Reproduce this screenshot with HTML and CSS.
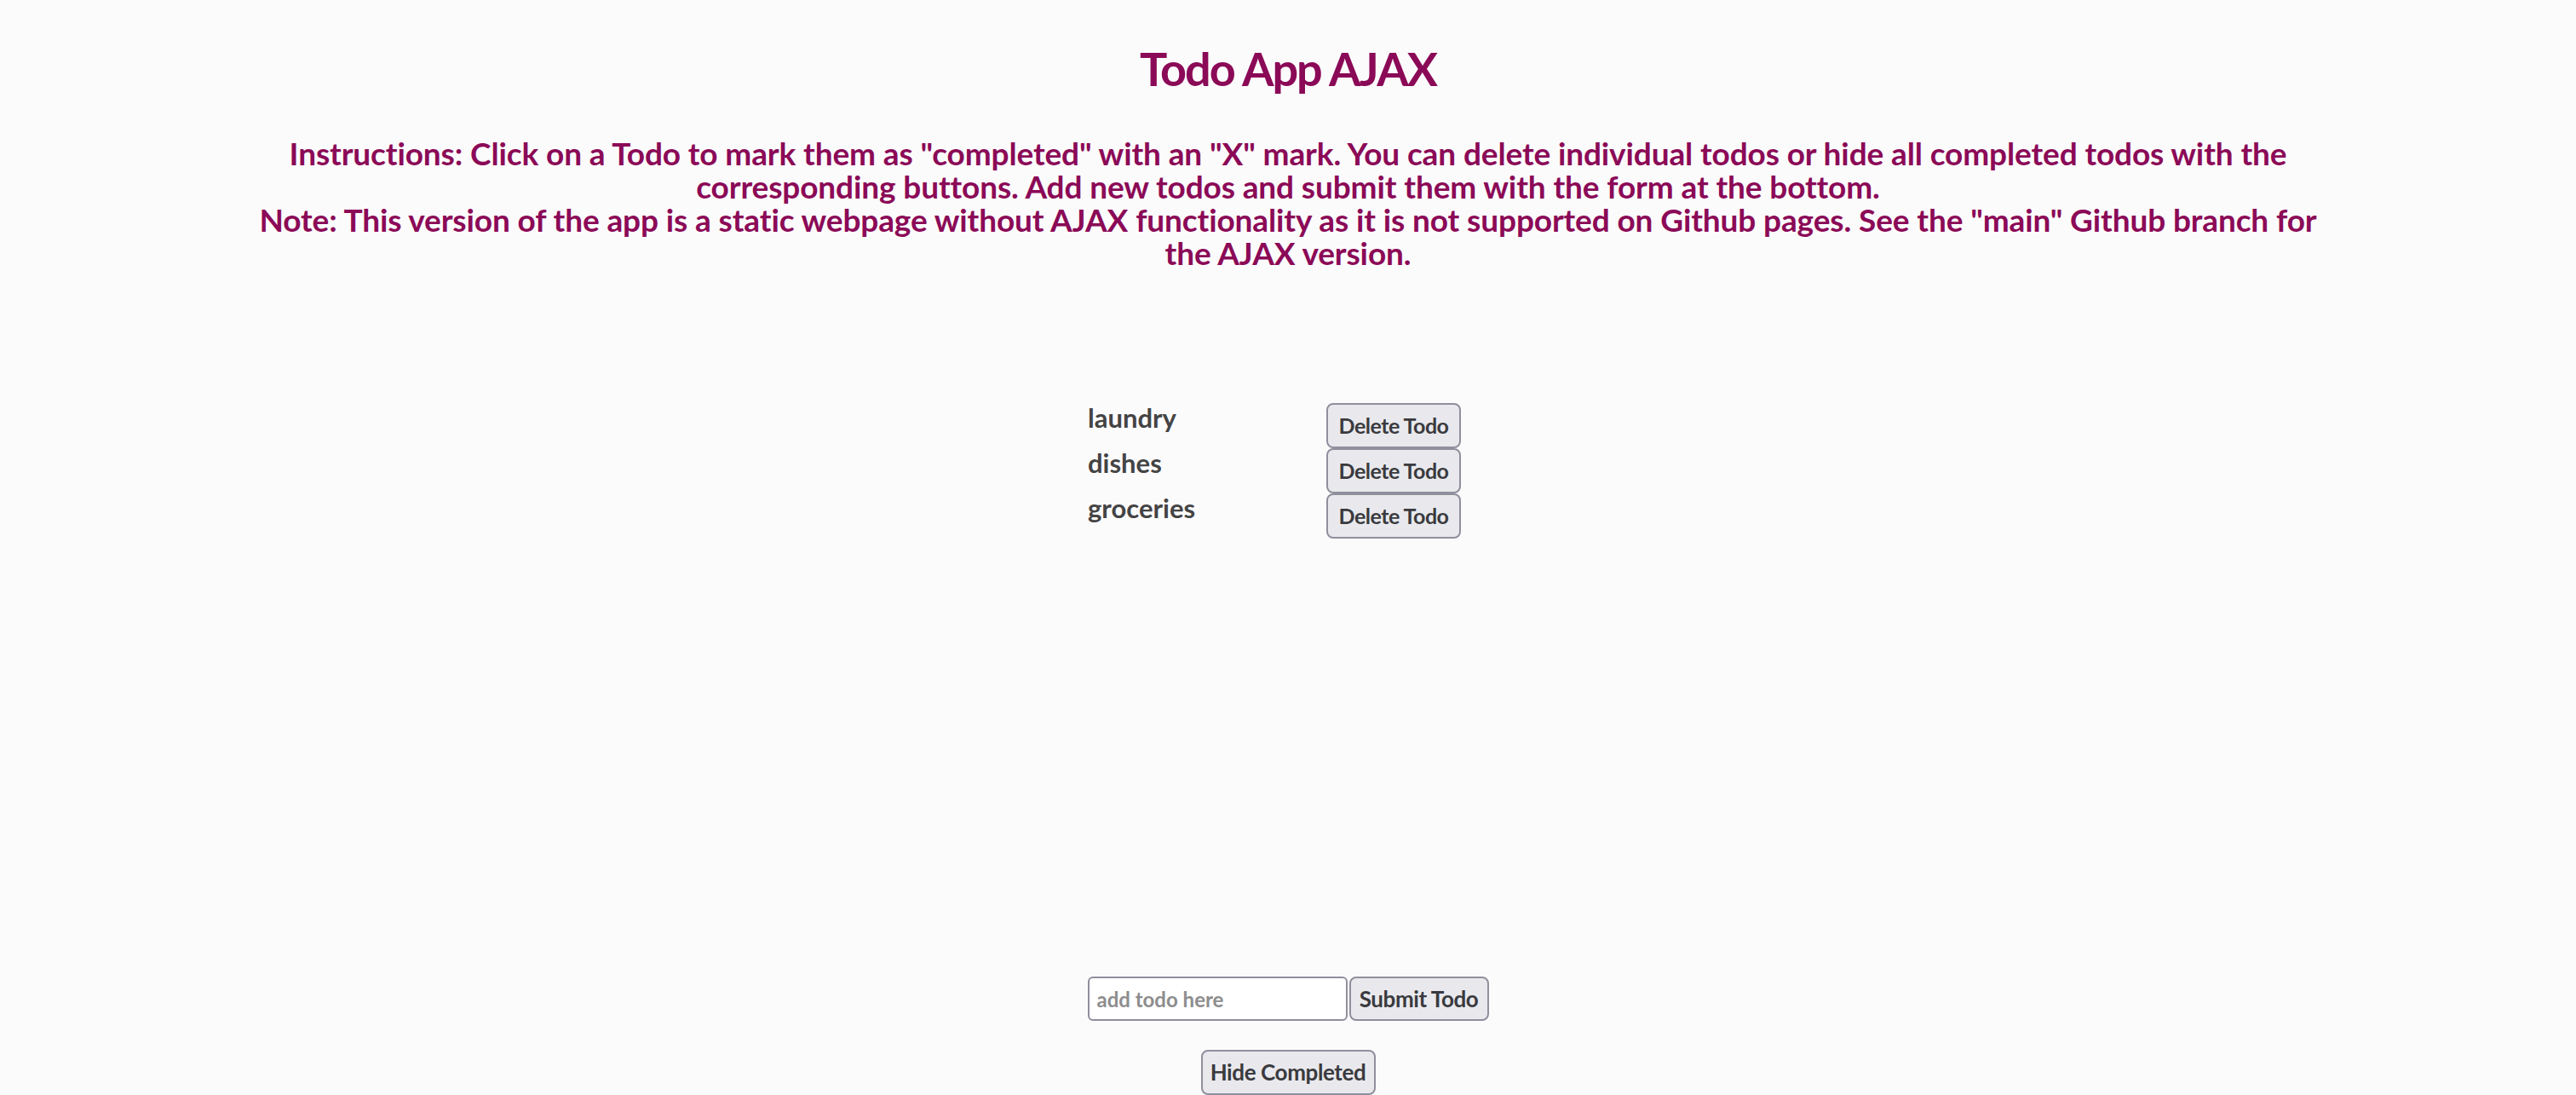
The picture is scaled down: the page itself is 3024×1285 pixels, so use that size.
FILE: index.html
```html
<!DOCTYPE html>
<html lang="en">
  <head>
    <meta charset="UTF-8" />
    <meta name="viewport" content="width=device-width, initial-scale=1.0" />
    <title>Todo App AJAX</title>
    <link rel="stylesheet" href="styles.css">
  </head>
  <body>
    <h1 class="title">Todo App AJAX</h1>
    <h3 class="notes">
      Instructions: Click on a Todo to mark them as "completed" with an "X" mark. You can delete individual todos or hide all completed todos with the corresponding buttons. Add new todos and submit them with the form at the bottom.<br>
      Note: This version of the app is a static webpage without AJAX functionality as it is not supported on Github pages. See the "main" Github branch for the AJAX version.
    </h3>
    <main class="app">
      <ul class="todo-list">
        <li><span class="todo-text">laundry</span><button class="btn delete">Delete Todo</button></li>
        <li><span class="todo-text">dishes</span><button class="btn delete">Delete Todo</button></li>
        <li><span class="todo-text">groceries</span><button class="btn delete">Delete Todo</button></li>
      </ul>
      <form class="todo-form">
        <input type="text" placeholder="add todo here" />
        <button class="btn submit" type="submit">Submit Todo</button>
      </form>
      <div class="hide-row">
        <button class="btn hide">Hide Completed</button>
      </div>
    </main>
  </body>
</html>
```

FILE: styles.css
```css
* {
  margin: 0;
  padding: 0;
  box-sizing: border-box;
}
ul {
  list-style: none;
}
html,
body {
  height: 1285px;
  overflow: hidden;
}
body {
  background: #fcfbfc;
  font-family: Lato, "Liberation Sans", sans-serif;
  color: #444;
}
.title {
  margin-top: 53px;
  font-size: 54px;
  line-height: 56px;
  letter-spacing: -2px;
  text-align: center;
  color: #8b0a57;
}
.notes {
  width: 2440px;
  margin: 51px auto 0;
  font-size: 37px;
  line-height: 39px;
  letter-spacing: -0.12px;
  text-align: center;
  color: #8b0a57;
}
.app {
  margin-top: 157px;
}
.todo-list {
  width: 470px;
  height: 673px;
  margin: 0 auto;
}
.todo-list li {
  display: flex;
  align-items: flex-start;
}
.todo-text {
  width: 280px;
  font-size: 31px;
  line-height: 34px;
  font-weight: bold;
  color: #444;
  cursor: pointer;
}
.btn {
  height: 53px;
  padding: 9px 6px;
  border: 2px solid #8f8f9d;
  border-radius: 8px;
  background: #e9e9ed;
  color: #3a3a3e;
  font-family: inherit;
  font-size: 25px;
  line-height: 31px;
  letter-spacing: -0.5px;
  font-weight: bold;
  white-space: nowrap;
  cursor: pointer;
}
.delete {
  width: 158px;
}
.todo-form {
  display: flex;
  justify-content: center;
  gap: 2px;
}
.todo-form input {
  width: 305px;
  height: 52px;
  padding: 0 9px;
  border: 2px solid #8f8f9d;
  border-radius: 6px;
  background: #fff;
  font-family: inherit;
  font-size: 24px;
  font-weight: bold;
  color: #333;
}
.todo-form input::placeholder {
  color: #8d8d8d;
}
.submit,
.hide {
  font-size: 26px;
  letter-spacing: -0.4px;
}
.submit {
  width: 164px;
  height: 52px;
  padding: 8px 6px;
}
.hide-row {
  display: flex;
  justify-content: center;
  margin-top: 34px;
}
.hide {
  width: 205px;
}
```
